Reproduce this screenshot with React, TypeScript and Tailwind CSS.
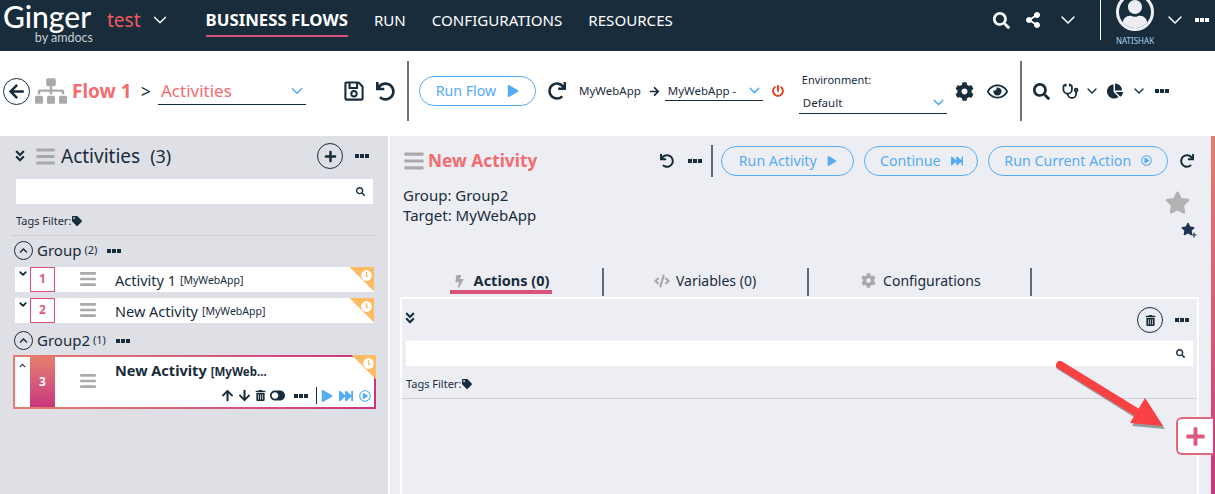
import type { ReactNode } from 'react'
import {
  FaAngleDoubleDown,
  FaArrowDown,
  FaArrowLeft,
  FaArrowRight,
  FaArrowUp,
  FaBars,
  FaBolt,
  FaChartPie,
  FaChevronUp,
  FaClock,
  FaCode,
  FaCog,
  FaFastForward,
  FaPlay,
  FaPlus,
  FaPowerOff,
  FaRedo,
  FaRegEye,
  FaRegPlayCircle,
  FaRegSave,
  FaSearch,
  FaShareAlt,
  FaSitemap,
  FaStar,
  FaTag,
  FaToggleOn,
  FaTrashAlt,
  FaUndo,
  FaUser,
} from 'react-icons/fa'
import { LuChevronDown, LuStethoscope } from 'react-icons/lu'

const Dots = ({ className = '' }: { className?: string }) => (
  <div className={`flex shrink-0 gap-px ${className}`}>
    <span className="h-1 w-1 bg-current" />
    <span className="h-1 w-1 bg-current" />
    <span className="h-1 w-1 bg-current" />
  </div>
)

const Pill = ({ label, icon, className }: { label: string; icon: ReactNode; className: string }) => (
  <button
    className={`flex h-[30px] shrink-0 items-center justify-center gap-[10px] rounded-full border border-[#55acf5] text-[14.2px] text-[#55acf5] ${className}`}
  >
    {label}
    {icon}
  </button>
)

const Search = ({ className }: { className: string }) => (
  <div className={`flex h-[25px] items-center justify-end bg-white pr-2 ${className}`}>
    <FaSearch className="text-[9px] text-[#182c3c]" />
  </div>
)

const TagsFilter = () => (
  <div className="flex items-center gap-[1px] text-[11px] text-[#182c3c]">
    Tags Filter:
    <FaTag className="text-[10px]" />
  </div>
)

const Corner = () => (
  <div className="absolute right-0 top-0 h-[25px] w-[25px] bg-[#fdbb63] [clip-path:polygon(0_0,100%_0,100%_100%)]">
    <FaClock className="absolute right-[2px] top-[3px] text-[11px] text-white" />
  </div>
)

const ActivityRow = ({ n, name, tag }: { n: number; name: string; tag: string }) => (
  <div className="relative ml-[15px] flex h-[25px] w-[359px] items-center bg-white">
    <LuChevronDown className="ml-[1px] mb-3 w-[14px] text-[11px] text-[#182c3c]" strokeWidth={4} />
    <div className="flex h-full w-[25px] items-center justify-center border border-[#db4d7b] text-[12px] font-bold text-[#db5c7a]">
      {n}
    </div>
    <FaBars className="ml-[24px] text-[18px] text-[#a9a9a9]" />
    <span className="ml-[18px] mt-[3px] text-[14.5px] text-[#182c3c]">{name}</span>
    <span className="ml-1 mt-[3px] text-[10.5px] text-[#182c3c]">{tag}</span>
    <Corner />
  </div>
)

const GroupRow = ({ name, count, className }: { name: string; count: number; className: string }) => (
  <div className={`ml-[14px] flex h-[20px] items-center text-[#182c3c] ${className}`}>
    <div className="flex h-[19px] w-[19px] items-center justify-center rounded-full border border-[#182c3c]">
      <FaChevronUp className="text-[9px]" />
    </div>
    <span className="ml-1 text-[15px]">{name}</span>
    <span className="ml-[3px] text-[11px]">({count})</span>
    <Dots className="ml-[10px]" />
  </div>
)

const SelectedRow = () => (
  <div className="relative ml-[13px] mt-[4px] h-[54px] w-[363px] bg-gradient-to-r from-[#e57d6f] to-[#c9347e] p-[2px]">
    <div className="flex h-full bg-white">
      <FaChevronUp className="mt-[5px] w-[15px] shrink-0 text-[7px] text-[#182c3c]" />
      <div className="flex w-[25px] shrink-0 items-center justify-center bg-gradient-to-b from-[#e57d6f] to-[#c9347e] text-[12px] font-bold text-white">
        3
      </div>
      <FaBars className="ml-[24px] mt-[15px] shrink-0 text-[18px] text-[#a9a9a9]" />
      <div className="ml-[18px] flex grow flex-col">
        <div className="mt-[3px] flex items-baseline text-[#182c3c]">
          <span className="text-[14.5px] font-bold">New Activity</span>
          <span className="ml-1 text-[11.5px] font-bold">[MyWeb...</span>
        </div>
        <div className="ml-[106px] mt-[6px] flex items-center text-[13px] text-[#182c3c]">
          <FaArrowUp />
          <FaArrowDown className="ml-[4px]" />
          <FaTrashAlt className="ml-[4px] text-[11px]" />
          <FaToggleOn className="ml-[4px] scale-x-[-1] text-[15px]" />
          <Dots className="ml-[9px]" />
          <div className="ml-[8px] h-[17px] w-px bg-[#182c3c]" />
          <FaPlay className="ml-[4px] text-[12px] text-[#55acf5]" />
          <FaFastForward className="ml-[6px] text-[14px] text-[#55acf5]" />
          <FaRegPlayCircle className="ml-[6px] text-[12px] text-[#55acf5]" />
        </div>
      </div>
    </div>
    <Corner />
  </div>
)

const ActivitiesPanel = () => (
  <aside className="w-[388px] shrink-0 bg-[#dfe0e6] text-[#182c3c]">
    <div className="flex h-[43px] items-center pb-[3px] pl-[13px]">
      <FaAngleDoubleDown className="text-[14px]" />
      <FaBars className="ml-[8px] text-[21px] text-[#a9a9a9]" />
      <span className="ml-[5px] text-[19px]">Activities</span>
      <span className="ml-[10px] text-[18px]">(3)</span>
      <div className="ml-[146px] flex h-[26px] w-[26px] items-center justify-center rounded-full border border-[#182c3c]">
        <FaPlus className="text-[13px]" />
      </div>
      <Dots className="ml-[12px]" />
    </div>
    <Search className="ml-[16px] w-[357px]" />
    <div className="ml-[16px] mt-[9px]">
      <TagsFilter />
    </div>
    <div className="ml-[11px] mt-[5px] h-px w-[367px] bg-[#cfd0d4]" />
    <GroupRow name="Group" count={2} className="mt-[5px]" />
    <div className="mt-[6px] flex flex-col gap-[6px]">
      <ActivityRow n={1} name="Activity 1" tag="[MyWebApp]" />
      <ActivityRow n={2} name="New Activity" tag="[MyWebApp]" />
    </div>
    <GroupRow name="Group2" count={1} className="mt-[8px]" />
    <SelectedRow />
  </aside>
)

const TabDivider = ({ className }: { className: string }) => (
  <div className={`h-[28px] w-[2px] bg-[#5c6b78] ${className}`} />
)

const ActivityDetail = () => (
  <main className="flex min-w-0 grow flex-col bg-[#edeef4] text-[#182c3c]">
    <div className="mt-[10px] flex h-[29px] items-center pl-[13px]">
      <FaBars className="text-[22px] text-[#a9a9a9]" />
      <span className="ml-[3px] text-[17.3px] font-bold text-[#f56b6f]">New Activity</span>
      <FaUndo className="ml-[123px] text-[14px]" />
      <Dots className="ml-[14px]" />
      <div className="ml-[9px] h-[32px] w-[2px] bg-[#5c6b78]" />
      <Pill
        label="Run Activity"
        className="ml-[8px] w-[133px]"
        icon={<FaPlay className="text-[10px]" />}
      />
      <Pill
        label="Continue"
        className="ml-[10px] w-[114px]"
        icon={<FaFastForward className="text-[12px]" />}
      />
      <Pill
        label="Run Current Action"
        className="ml-[10px] w-[180px]"
        icon={<FaRegPlayCircle className="text-[11px]" />}
      />
      <FaRedo className="ml-[12px] text-[14px]" />
    </div>
    <div className="flex">
      <div className="ml-[13px] mt-[10px] text-[15px] leading-[20px]">
        <div>Group: Group2</div>
        <div>Target: MyWebApp</div>
      </div>
      <div className="ml-auto mr-[14px] mt-[15px] flex flex-col items-end">
        <FaStar className="mr-[7px] text-[25px] text-[#b3b3b3]" />
        <div className="relative mt-[7px] h-[16px] w-[16px]">
          <FaStar className="text-[14px] text-[#1f3352]" />
          <FaPlus className="absolute bottom-0 right-0 text-[6px] text-[#1f3352]" />
        </div>
      </div>
    </div>
    <div className="mt-[30px] flex h-[29px] items-start text-[14px]">
      <div className="ml-[60px] flex h-[26px] w-[102px] items-center justify-center gap-2 border-b-[4px] border-[#d8527a] pt-[4px] text-[14.5px] font-bold">
        <FaBolt className="text-[13px] text-[#a9a9a9]" />
        Actions (0)
      </div>
      <TabDivider className="ml-[50px]" />
      <div className="ml-[50px] flex h-[25px] items-center gap-[6px]">
        <FaCode className="text-[16px] text-[#a9a9a9]" />
        Variables (0)
      </div>
      <TabDivider className="ml-[51px]" />
      <div className="ml-[52px] flex h-[25px] items-center gap-[7px]">
        <FaCog className="text-[15px] text-[#a9a9a9]" />
        Configurations
      </div>
      <TabDivider className="ml-[49px]" />
    </div>
    <div className="ml-[10px] mr-[12px] grow border-2 border-b-0 border-white">
      <div className="flex h-[42px] items-center pl-[1px]">
        <FaAngleDoubleDown className="mb-1 text-[14px]" />
        <div className="ml-auto flex h-[26px] w-[26px] items-center justify-center rounded-full border border-[#182c3c]">
          <FaTrashAlt className="text-[11px]" />
        </div>
        <Dots className="ml-[12px] mr-[8px]" />
      </div>
      <Search className="ml-[4px] w-[787px]" />
      <div className="ml-[4px] mt-[10px]">
        <TagsFilter />
      </div>
      <div className="mt-[5px] h-px bg-[#cfd0d4]" />
    </div>
  </main>
)

const Toolbar = () => (
  <div className="flex h-[84px] items-center bg-white pb-[4px] text-[#182c3c]">
    <div className="ml-[3px] flex h-[27px] w-[27px] items-center justify-center rounded-full border border-[#182c3c]">
      <FaArrowLeft className="text-[17px]" />
    </div>
    <FaSitemap className="ml-[5px] text-[32px] text-[#a9a9a9]" />
    <span className="ml-[5px] text-[19px] font-bold text-[#f56b6f]">Flow 1</span>
    <span className="ml-[9px] text-[18px]">&gt;</span>
    <div className="ml-[7px] flex h-[27px] w-[148px] items-center justify-between border-b border-[#182c3c] pl-[3px] text-[17px] text-[#f56b6f]">
      Activities
      <LuChevronDown className="text-[18px] text-[#55acf5]" />
    </div>
    <FaRegSave className="ml-[37px] text-[22px]" />
    <FaUndo className="ml-[11px] text-[19px]" />
    <div className="ml-[12px] h-[60px] w-[2px] bg-[#6b7680]" />
    <Pill
      label="Run Flow"
      className="ml-[10px] w-[117px] gap-[11px]"
      icon={<FaPlay className="text-[12px]" />}
    />
    <FaRedo className="ml-[12px] text-[18px]" />
    <span className="ml-[13px] text-[11.5px]">MyWebApp</span>
    <FaArrowRight className="ml-[8px] text-[11px]" />
    <div className="ml-[5px] flex h-[20px] w-[98px] items-center justify-between border-b border-[#182c3c] pl-[3px] text-[11.5px]">
      MyWebApp -
      <LuChevronDown className="text-[17px] text-[#55acf5]" />
    </div>
    <FaPowerOff className="ml-[9px] text-[12px] text-[#e2401b]" />
    <div className="ml-[15px] mt-[4px] flex w-[148px] flex-col">
      <span className="pl-[3px] text-[11px]">Environment:</span>
      <div className="mt-[4px] flex h-[21px] items-center justify-between border-b border-[#182c3c] pl-[4px] text-[11.5px]">
        Default
        <LuChevronDown className="text-[17px] text-[#55acf5]" />
      </div>
    </div>
    <FaCog className="ml-[8px] text-[19px]" />
    <FaRegEye className="ml-[13px] text-[21px]" />
    <div className="ml-[12px] h-[60px] w-[2px] bg-[#6b7680]" />
    <FaSearch className="ml-[11px] text-[17px]" />
    <LuStethoscope className="ml-[12px] text-[17px]" strokeWidth={2.5} />
    <LuChevronDown className="ml-[5px] text-[16px]" />
    <FaChartPie className="ml-[7px] text-[16px]" />
    <LuChevronDown className="ml-[8px] text-[16px]" />
    <Dots className="ml-[8px]" />
  </div>
)

const Header = () => (
  <header className="flex h-[51px] items-start bg-[#182c3c] text-white">
    <div className="ml-[3px] mt-[2px] flex w-[90px] flex-col items-end font-['Lato',sans-serif]">
      <span className="h-[30px] w-full text-[30px] font-medium leading-[28px]">Ginger</span>
      <span className="text-[12.5px] leading-[12px] text-[#c8ced4]">by amdocs</span>
    </div>
    <span className="ml-[14px] mt-[6px] text-[19px] leading-[28px] text-[#f2595f]">test</span>
    <LuChevronDown className="ml-[8px] mt-[9px] text-[22px]" strokeWidth={1.5} />
    <nav className="ml-[35px] flex h-[41px] items-center gap-[26px] text-[15.1px]">
      <span className="border-b-[2px] border-[#d8527a] pb-[3px] pt-[4px] text-[16.8px] font-bold leading-[24px]">
        BUSINESS FLOWS
      </span>
      <span>RUN</span>
      <span>CONFIGURATIONS</span>
      <span>RESOURCES</span>
    </nav>
    <div className="ml-auto flex h-[40px] items-center">
      <FaSearch className="text-[17px]" />
      <FaShareAlt className="ml-[15px] text-[16px]" />
      <LuChevronDown className="ml-[15px] text-[24px]" strokeWidth={1.5} />
      <div className="ml-[20px] h-[40px] w-px bg-white" />
      <div className="ml-[14px] flex w-[40px] flex-col items-center">
        <div className="flex h-[38px] w-[38px] -translate-y-[2px] items-end justify-center overflow-hidden rounded-full border-[3px] border-[#edeef4]">
          <FaUser className="text-[28px] text-[#edeef4]" />
        </div>
        <span className="h-[12px] translate-y-[2px] text-[8px] leading-[12px] text-[#a9d4ef]">NATISHAK</span>
      </div>
      <LuChevronDown className="ml-[8px] text-[24px]" strokeWidth={1.5} />
      <Dots className="ml-[8px] mr-[6px]" />
    </div>
  </header>
)

// callout drawn on top of the screenshot, not part of the app itself
const Callout = () => (
  <>
    <svg className="absolute left-[1050px] top-[355px]" width="120" height="85" viewBox="0 0 120 85">
      <g fill="#000" opacity="0.35" transform="translate(2 3)">
        <path d="M8 8 L88 58" stroke="#000" strokeWidth="8" strokeLinecap="round" />
        <path d="M95 43 L113 71 L80 68 Z" />
      </g>
      <path d="M10 10 L88 58" stroke="#f94144" strokeWidth="8" strokeLinecap="round" />
      <path d="M95 43 L113 71 L80 68 Z" fill="#f94144" />
    </svg>
    <div className="absolute left-[1176px] top-[417px] flex h-[38px] w-[37px] items-center justify-center rounded-l-[6px] border-2 border-r-0 border-[#e0677c] bg-white">
      <FaPlus className="text-[21px] text-[#dc5a7c]" />
    </div>
  </>
)

export default function App() {
  return (
    <div className="relative flex h-[494px] w-[1215px] flex-col overflow-hidden bg-white font-['Noto_Sans',sans-serif]">
      <Header />
      <Toolbar />
      <div className="mt-px flex min-h-0 grow">
        <ActivitiesPanel />
        <div className="w-[2px] shrink-0 bg-white" />
        <ActivityDetail />
        <div className="w-[4px] shrink-0 bg-gradient-to-b from-[#e57d6f] to-[#c9347e]" />
      </div>
      <Callout />
    </div>
  )
}
